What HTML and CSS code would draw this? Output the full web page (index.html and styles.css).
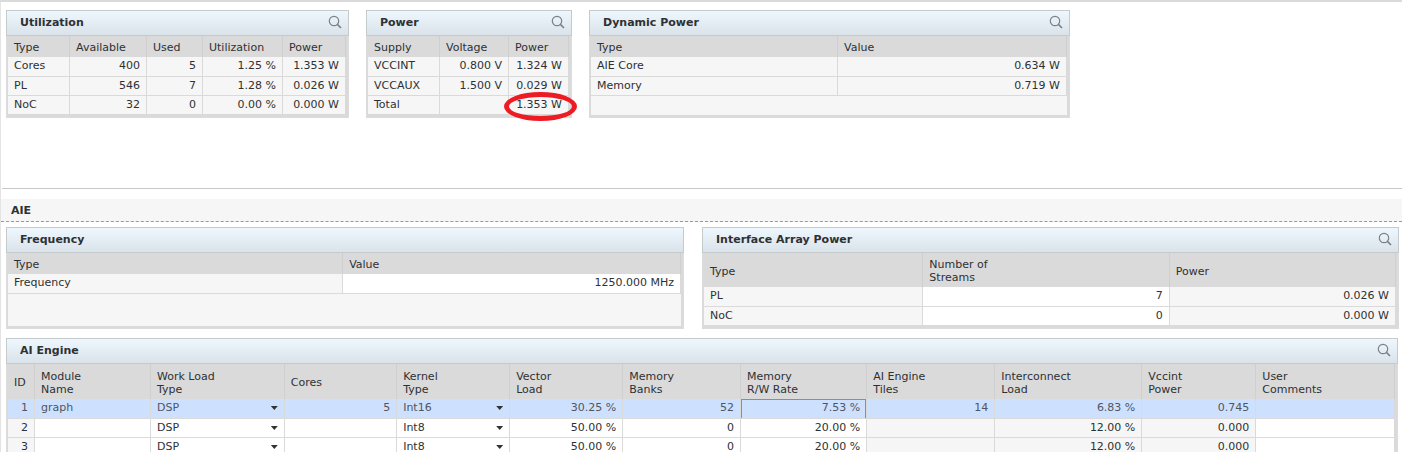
FILE: index.html
```
<!DOCTYPE html>
<html lang="en">
<head>
<meta charset="utf-8">
<title>AIE Power</title>
<link rel="stylesheet" href="styles.css">
</head>
<body>
<svg class="defs" aria-hidden="true"><symbol id="lens" viewBox="0 0 14 14"><circle cx="6" cy="6" r="4.7" fill="none" stroke="currentColor" stroke-width="1.2"/><path d="M9.4 9.4L13 13" fill="none" stroke="currentColor" stroke-width="1.6"/></symbol></svg>
<main class="page">
  <section class="summary">
    <article class="panel">
      <header class="bar"><h2>Utilization</h2><button class="search" aria-label="Search Utilization"><svg><use href="#lens"/></svg></button></header>
      <div class="body">
      <table>
        <colgroup><col class="w62"><col class="w77"><col class="w56"><col class="w80"><col></colgroup>
        <thead><tr><th>Type</th><th>Available</th><th>Used</th><th>Utilization</th><th>Power</th></tr></thead>
        <tbody>
          <tr><td>Cores</td><td class="num">400</td><td class="num">5</td><td class="num">1.25 %</td><td class="num">1.353 W</td></tr>
          <tr><td>PL</td><td class="num">546</td><td class="num">7</td><td class="num">1.28 %</td><td class="num">0.026 W</td></tr>
          <tr><td>NoC</td><td class="num">32</td><td class="num">0</td><td class="num">0.00 %</td><td class="num">0.000 W</td></tr>
        </tbody>
      </table>
      </div>
    </article>
    <article class="panel">
      <header class="bar"><h2>Power</h2><button class="search" aria-label="Search Power"><svg><use href="#lens"/></svg></button></header>
      <div class="body">
      <table>
        <colgroup><col class="w72"><col class="w69"><col></colgroup>
        <thead><tr><th>Supply</th><th>Voltage</th><th>Power</th></tr></thead>
        <tbody>
          <tr><td>VCCINT</td><td class="num">0.800 V</td><td class="num">1.324 W</td></tr>
          <tr><td>VCCAUX</td><td class="num">1.500 V</td><td class="num">0.029 W</td></tr>
          <tr><td>Total</td><td></td><td class="num marked">1.353 W<span class="ring"></span></td></tr>
        </tbody>
      </table>
      </div>
    </article>
    <article class="panel">
      <header class="bar"><h2>Dynamic Power</h2><button class="search" aria-label="Search Dynamic Power"><svg><use href="#lens"/></svg></button></header>
      <div class="body">
      <table>
        <colgroup><col class="p52"><col></colgroup>
        <thead><tr><th>Type</th><th>Value</th></tr></thead>
        <tbody>
          <tr><td>AIE Core</td><td class="num">0.634 W</td></tr>
          <tr><td>Memory</td><td class="num">0.719 W</td></tr>
        </tbody>
      </table>
      </div>
    </article>
  </section>

  <h1 class="section-title">AIE</h1>

  <section class="middle">
    <article class="panel">
      <header class="bar"><h2>Frequency</h2></header>
      <div class="body">
      <table>
        <colgroup><col class="p50"><col></colgroup>
        <thead><tr><th>Type</th><th>Value</th></tr></thead>
        <tbody><tr><td>Frequency</td><td class="edit num"><input aria-label="Frequency" value="1250.000 MHz"></td></tr></tbody>
      </table>
      </div>
    </article>
    <article class="panel">
      <header class="bar"><h2>Interface Array Power</h2><button class="search" aria-label="Search Interface Array Power"><svg><use href="#lens"/></svg></button></header>
      <div class="body">
      <table class="streams">
        <colgroup><col class="p32"><col class="p36"><col></colgroup>
        <thead><tr><th>Type</th><th>Number of<br>Streams</th><th>Power</th></tr></thead>
        <tbody>
          <tr><td>PL</td><td class="edit num"><input aria-label="PL streams" value="7"></td><td class="num">0.026 W</td></tr>
          <tr><td>NoC</td><td class="edit num"><input aria-label="NoC streams" value="0"></td><td class="num">0.000 W</td></tr>
        </tbody>
      </table>
      </div>
    </article>
  </section>

  <section class="engine">
    <article class="panel">
      <header class="bar"><h2>AI Engine</h2><button class="search" aria-label="Search AI Engine"><svg><use href="#lens"/></svg></button></header>
      <div class="body">
      <table class="tall">
        <colgroup><col class="w27"><col class="w116"><col class="w134"><col class="w112"><col class="w113"><col class="w113"><col class="w118"><col class="w126"><col class="w128"><col class="w147"><col class="w114"><col></colgroup>
        <thead><tr><th>ID</th><th>Module<br>Name</th><th>Work Load<br>Type</th><th>Cores</th><th>Kernel<br>Type</th><th>Vector<br>Load</th><th>Memory<br>Banks</th><th>Memory<br>R/W Rate</th><th>AI Engine<br>Tiles</th><th>Interconnect<br>Load</th><th>Vccint<br>Power</th><th>User<br>Comments</th></tr></thead>
        <tbody>
          <tr class="selected"><td class="num">1</td><td class="edit"><input aria-label="Module name 1" value="graph"></td><td class="edit pick"><select aria-label="Work load type 1"><option>DSP</option></select></td><td class="edit num"><input aria-label="Cores 1" value="5"></td><td class="edit pick"><select aria-label="Kernel type 1"><option>Int16</option><option>Int8</option></select></td><td class="edit num"><input aria-label="Vector load 1" value="30.25 %"></td><td class="edit num"><input aria-label="Memory banks 1" value="52"></td><td class="edit num current"><input aria-label="Memory R/W rate 1" value="7.53 %"></td><td class="num">14</td><td class="num">6.83 %</td><td class="num">0.745</td><td class="edit"><input aria-label="User comments 1"></td></tr>
          <tr><td class="num">2</td><td class="edit"><input aria-label="Module name 2"></td><td class="edit pick"><select aria-label="Work load type 2"><option>DSP</option></select></td><td class="edit num"><input aria-label="Cores 2"></td><td class="edit pick"><select aria-label="Kernel type 2"><option>Int8</option><option>Int16</option></select></td><td class="edit num"><input aria-label="Vector load 2" value="50.00 %"></td><td class="edit num"><input aria-label="Memory banks 2" value="0"></td><td class="edit num"><input aria-label="Memory R/W rate 2" value="20.00 %"></td><td></td><td class="num">12.00 %</td><td class="num">0.000</td><td class="edit"><input aria-label="User comments 2"></td></tr>
          <tr><td class="num">3</td><td class="edit"><input aria-label="Module name 3"></td><td class="edit pick"><select aria-label="Work load type 3"><option>DSP</option></select></td><td class="edit num"><input aria-label="Cores 3"></td><td class="edit pick"><select aria-label="Kernel type 3"><option>Int8</option><option>Int16</option></select></td><td class="edit num"><input aria-label="Vector load 3" value="50.00 %"></td><td class="edit num"><input aria-label="Memory banks 3" value="0"></td><td class="edit num"><input aria-label="Memory R/W rate 3" value="20.00 %"></td><td></td><td class="num">12.00 %</td><td class="num">0.000</td><td class="edit"><input aria-label="User comments 3"></td></tr>
        </tbody>
      </table>
      </div>
    </article>
  </section>
</main>
</body>
</html>
```
FILE: styles.css
```
* { box-sizing: border-box; }
body {
  margin: 0;
  height: 100vh;
  overflow: hidden;
  background: #fff;
  color: #2e3133;
  font: 11px/13px "DejaVu Sans", sans-serif;
}
.defs { display: none; }
.page {
  min-height: 100vh;
  border-top: 2px solid #dadada;
  border-left: 1px solid #e4e4e4;
}
.summary {
  display: grid;
  grid-template-columns: 343px 206px minmax(0, 481px);
  gap: 17px;
  align-items: stretch;
  margin-left: 1px;
  padding: 8px 4px 70px;
  border-bottom: 1px solid #c8c8c8;
}
.section-title {
  margin: 10px 0 5px;
  padding: 5px 10px 4px;
  border-bottom: 1px dashed #999;
  background: #f6f6f6;
  font-size: 11px;
  line-height: 13px;
}
.middle {
  display: grid;
  grid-template-columns: 678fr 697fr;
  gap: 18px;
  padding: 0 3px 0 5px;
}
.engine { padding: 9px 4px 0 5px; }
.panel {
  display: flex;
  flex-direction: column;
  min-width: 0;
  border: 1px solid #dcdcdc;
  border-top: 0;
  background: #dadada;
}
.bar {
  display: flex;
  align-items: center;
  justify-content: space-between;
  height: 26px;
  margin: 0 -1px;
  padding: 0 6px 2px 13px;
  border: 1px solid #c5cacd;
  background: linear-gradient(#eef6fe, #dae3ea);
}
.bar h2 { margin: 0; font-size: 11px; line-height: 13px; }
.search {
  width: 14px;
  height: 14px;
  padding: 0;
  border: 0;
  background: none;
  color: #7b8186;
}
.search svg { display: block; width: 14px; height: 14px; }
.body {
  flex: 1;
  margin: 0 2px 2px 1px;
  background: #f6f6f6;
}
table {
  width: 100%;
  table-layout: fixed;
  border-collapse: separate;
  border-spacing: 0;
}
th {
  height: 21px;
  padding: 2px 6px 0;
  border-right: 1px solid #cfcfcf;
  background: #dadada;
  font-weight: normal;
  text-align: left;
  vertical-align: middle;
}
.tall th { height: 35px; }
.streams th { height: 34px; }
td {
  height: 20px;
  padding: 0 6px 2px;
  border-right: 1px solid #dadada;
  border-bottom: 1px solid #dadada;
  background: #f6f6f6;
  vertical-align: middle;
  white-space: nowrap;
}
tr:nth-child(n+2) td { height: 19px; }
.num { text-align: right; }
.edit { background: #fff; }
input, select {
  display: block;
  width: 100%;
  height: 13px;
  margin: 0;
  padding: 0;
  border: 0;
  outline: 0;
  background: none;
  color: inherit;
  font: inherit;
  text-align: inherit;
  appearance: none;
}
.pick { position: relative; }
.pick::after {
  content: "";
  position: absolute;
  right: 6px;
  top: 7px;
  width: 7px;
  height: 4px;
  background: #333;
  clip-path: polygon(0 0, 100% 0, 50% 100%);
  pointer-events: none;
}
.selected td { background: #cde1ff; color: #50555e; }
td.current { box-shadow: inset 1px 1px #5b9bd0, inset -1px 0 #5b9bd0; }
.marked { position: relative; }
.ring {
  position: absolute;
  left: -5px;
  top: -4px;
  width: 73px;
  height: 29px;
  border: 5px solid #ed1c24;
  border-radius: 50%;
}
.w27 { width: 27px; }
.w56 { width: 56px; }
.w62 { width: 62px; }
.w69 { width: 69px; }
.w72 { width: 72px; }
.w77 { width: 77px; }
.w80 { width: 80px; }
.w112 { width: 8.1%; }
.w113 { width: 8.15%; }
.w114 { width: 8.22%; }
.w116 { width: 8.36%; }
.w118 { width: 8.5%; }
.w126 { width: 9.1%; }
.w128 { width: 9.23%; }
.w134 { width: 9.65%; }
.w147 { width: 10.6%; }
.p32 { width: 31.7%; }
.p36 { width: 35.6%; }
.p50 { width: 49.8%; }
.p52 { width: 51.9%; }
```
